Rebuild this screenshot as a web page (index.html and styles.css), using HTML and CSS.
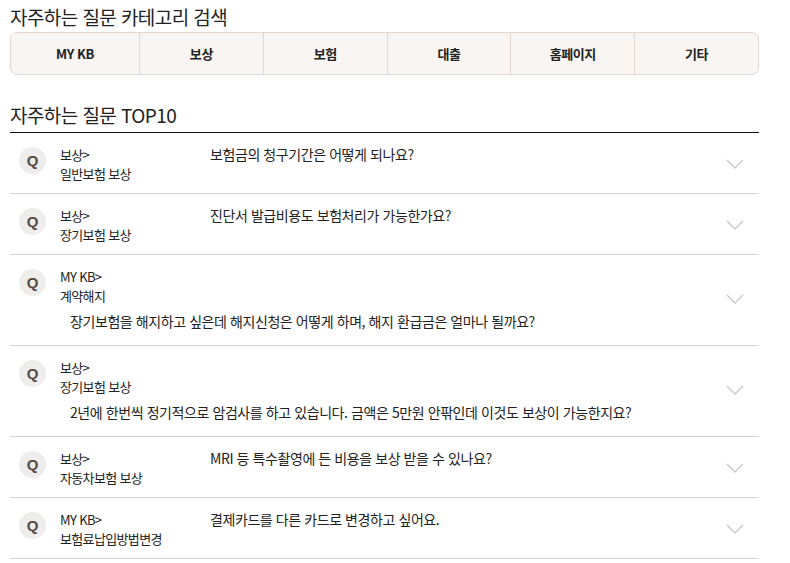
FILE: index.html
```html
<!DOCTYPE html>
<html lang="ko">
<head>
<meta charset="utf-8">
<title>자주하는 질문</title>
<link rel="stylesheet" href="styles.css">
</head>
<body>
<div class="page">
  <h2 class="title title-first">자주하는 질문 카테고리 검색</h2>
  <ul class="cat-bar">
    <li class="cat">MY KB</li>
    <li class="cat">보상</li>
    <li class="cat">보험</li>
    <li class="cat">대출</li>
    <li class="cat">홈페이지</li>
    <li class="cat">기타</li>
  </ul>

  <h2 class="title title-second">자주하는 질문 TOP10</h2>
  <ul class="faq">
    <li class="faq-item">
      <span class="q">Q</span>
      <div class="faq-cat"><span>보상&gt;</span><span>일반보험 보상</span></div>
      <p class="faq-q">보험금의 청구기간은 어떻게 되나요?</p>
      <svg class="chev" viewBox="0 0 18 10" width="18" height="10"><polyline points="1,1 9,9 17,1"/></svg>
    </li>
    <li class="faq-item">
      <span class="q">Q</span>
      <div class="faq-cat"><span>보상&gt;</span><span>장기보험 보상</span></div>
      <p class="faq-q">진단서 발급비용도 보험처리가 가능한가요?</p>
      <svg class="chev" viewBox="0 0 18 10" width="18" height="10"><polyline points="1,1 9,9 17,1"/></svg>
    </li>
    <li class="faq-item wrap">
      <span class="q">Q</span>
      <div class="faq-cat"><span>MY KB&gt;</span><span>계약해지</span></div>
      <p class="faq-q">장기보험을 해지하고 싶은데 해지신청은 어떻게 하며, 해지 환급금은 얼마나 될까요?</p>
      <svg class="chev" viewBox="0 0 18 10" width="18" height="10"><polyline points="1,1 9,9 17,1"/></svg>
    </li>
    <li class="faq-item wrap">
      <span class="q">Q</span>
      <div class="faq-cat"><span>보상&gt;</span><span>장기보험 보상</span></div>
      <p class="faq-q">2년에 한번씩 정기적으로 암검사를 하고 있습니다. 금액은 5만원 안팎인데 이것도 보상이 가능한지요?</p>
      <svg class="chev" viewBox="0 0 18 10" width="18" height="10"><polyline points="1,1 9,9 17,1"/></svg>
    </li>
    <li class="faq-item">
      <span class="q">Q</span>
      <div class="faq-cat"><span>보상&gt;</span><span>자동차보험 보상</span></div>
      <p class="faq-q">MRI 등 특수촬영에 든 비용을 보상 받을 수 있나요?</p>
      <svg class="chev" viewBox="0 0 18 10" width="18" height="10"><polyline points="1,1 9,9 17,1"/></svg>
    </li>
    <li class="faq-item">
      <span class="q">Q</span>
      <div class="faq-cat"><span>MY KB&gt;</span><span>보험료납입방법변경</span></div>
      <p class="faq-q">결제카드를 다른 카드로 변경하고 싶어요.</p>
      <svg class="chev" viewBox="0 0 18 10" width="18" height="10"><polyline points="1,1 9,9 17,1"/></svg>
    </li>
  </ul>
</div>
</body>
</html>
```

FILE: styles.css
```css
* { box-sizing: border-box; }
html, body { margin: 0; padding: 0; background: #fff; }
body {
  font-family: "Noto Sans CJK KR", "Noto Sans", sans-serif;
  color: #222;
}
.page { padding: 0 31px 0 10px; }

.title {
  margin: 0;
  font-size: 19px;
  font-weight: 400;
  line-height: 25px;
  color: #222;
  letter-spacing: -0.03em;
}
.title-first { padding-top: 4px; margin-bottom: 3px; }
.title-second { margin-top: 27px; margin-bottom: 5px; }

.cat-bar {
  list-style: none;
  margin: 0;
  padding: 0;
  display: grid;
  grid-template-columns: 128px repeat(5, 1fr);
  height: 43px;
  border: 1px solid #e2d8d0;
  border-radius: 7px;
  background: #f8f5f2;
  overflow: hidden;
}
.cat {
  display: flex;
  align-items: center;
  justify-content: center;
  font-size: 13px;
  font-weight: 700;
  color: #222;
  letter-spacing: -0.03em;
  border-left: 1px solid #e2d8d0;
}
.cat:first-child { border-left: none; }

.faq {
  list-style: none;
  margin: 0;
  padding: 0;
  border-top: 1px solid #111;
}
.faq-item {
  display: grid;
  grid-template-columns: 27px 164px 1fr 18px;
  column-gap: 0;
  align-items: start;
  padding: 12px 15px 10px 9px;
  border-bottom: 1px solid #d3d3d3;
}
.faq-item.wrap { padding-bottom: 14px; }

.q {
  grid-column: 1;
  grid-row: 1;
  width: 27px;
  height: 27px;
  margin-top: 2px;
  border-radius: 50%;
  background: #efedeb;
  color: #554a42;
  font-family: "Liberation Sans", Arial, sans-serif;
  font-weight: 700;
  font-size: 15px;
  display: flex;
  align-items: center;
  justify-content: center;
}
.faq-cat {
  grid-column: 2;
  grid-row: 1;
  margin-left: 14px;
  display: flex;
  flex-direction: column;
  font-size: 13px;
  line-height: 19px;
  color: #222;
  letter-spacing: -0.05em;
}
.faq-q {
  grid-column: 3;
  grid-row: 1;
  margin: 0;
  font-size: 14px;
  line-height: 19px;
  color: #222;
  letter-spacing: -0.03em;
}
.wrap .faq-q {
  grid-column: 2 / 4;
  grid-row: 2;
  margin: 7px 0 0 24px;
}
.chev {
  grid-column: 4;
  grid-row: 1;
  align-self: center;
  fill: none;
  stroke: #c9c9c9;
  stroke-width: 1.4;
}
.wrap .chev { grid-row: 1 / 3; }
```
